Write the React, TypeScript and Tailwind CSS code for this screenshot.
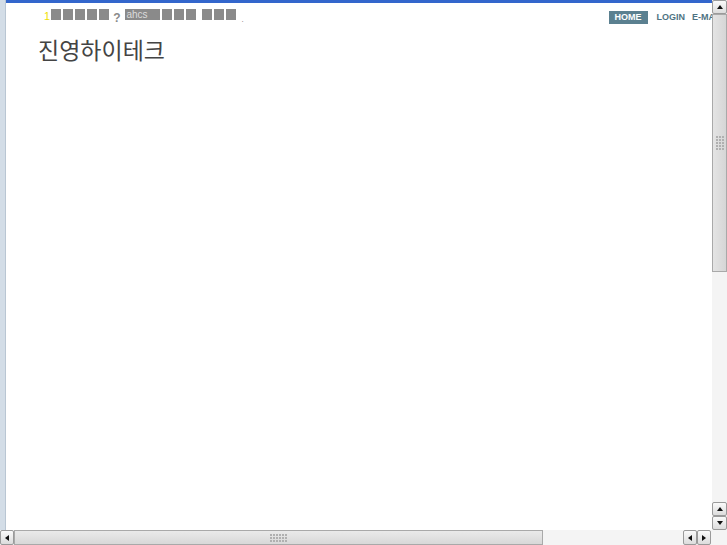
import React from "react";

const Block = () => <span className="inline-block w-[10px] h-[11px] bg-[#8a8a8a] mr-[2px]" />;

const Arrow = ({ dir }: { dir: "up" | "down" | "left" | "right" }) => {
  const pts =
    dir === "up" ? "1,6 4,2 7,6" : dir === "down" ? "1,2 4,6 7,2" : dir === "left" ? "6,1 2,4 6,7" : "2,1 6,4 2,7";
  return (
    <svg width="8" height="8" viewBox="0 0 8 8">
      <polygon points={pts} fill="#111" />
    </svg>
  );
};

const Btn = ({ dir, cls }: { dir: "up" | "down" | "left" | "right"; cls?: string }) => (
  <div
    className={`flex items-center justify-center border border-[#9a9a9a] rounded-[2px] bg-gradient-to-b from-[#fafafa] to-[#dcdcdc] ${cls ?? ""}`}
  >
    <Arrow dir={dir} />
  </div>
);

const Grip = ({ rows, cols }: { rows: number; cols: number }) => (
  <div className="grid gap-[1px]" style={{ gridTemplateColumns: `repeat(${cols}, 2px)` }}>
    {Array.from({ length: rows * cols }).map((_, i) => (
      <span key={i} className="w-[2px] h-[2px] bg-[#b0b0b0]" />
    ))}
  </div>
);

export default function App() {
  return (
    <div className="w-[727px] h-[545px] flex flex-col overflow-hidden bg-white" style={{ fontFamily: "'Liberation Sans', sans-serif" }}>
      <div className="flex flex-1 min-h-0">
        <div className="w-[6px] bg-[#d3dde7] border-r border-[#b9c6d3]" />
        <div className="flex-1 flex flex-col min-w-0 relative">
          <div className="h-[3px] bg-[#3366cc]" />
          <div className="flex items-start">
            <div className="pl-[38px] pt-[5px] flex items-center h-[17px] text-[11px] leading-none">
              <span className="text-[#f0e000] mr-[1px] mt-[5px]">1</span>
              <Block /><Block /><Block /><Block /><Block />
              <span className="text-[#8a8a8a] text-[12px] font-bold mt-[8px] ml-[2px] mr-[5px]">?</span>
              <span className="inline-block h-[11px] w-[35px] bg-[#8a8a8a] text-[#dcdcdc] text-[10px] leading-[12px] pl-[1px] mr-[2px]">ahcs</span>
              <Block /><Block /><Block />
              <span className="w-[4px]" />
              <Block /><Block /><Block />
              <span className="text-[#777] mt-[12px] ml-[3px] text-[8px]">.</span>
            </div>
            <div className="ml-auto flex items-center pt-[8px] font-bold whitespace-nowrap" style={{ fontFamily: "'Liberation Sans', sans-serif" }}>
              <span className="bg-[#5b8090] text-white text-[9px] h-[13px] leading-[13px] w-[39px] text-center">HOME</span>
              <span className="text-[#4f7383] text-[9px] ml-[9px]">LOGIN</span>
              <span className="text-[#4f7383] text-[9px] ml-[7px] w-[20px] overflow-hidden">E-MA</span>
            </div>
          </div>
          <div className="pl-[32px] mt-[10px] text-[23px] leading-[28px] text-[#444]" style={{ fontFamily: "'Noto Sans CJK KR', sans-serif" }}>
            진영하이테크
          </div>
        </div>
        <div className="w-[15px] flex flex-col bg-[#f3f3f3]">
          <Btn dir="up" cls="h-[14px]" />
          <div className="h-[258px] border border-[#a9a9a9] bg-gradient-to-r from-[#e4e4e4] to-[#d6d6d6] flex items-center justify-center">
            <Grip rows={5} cols={3} />
          </div>
          <div className="flex-1 bg-[#f4f4f4]" />
          <Btn dir="up" cls="h-[14px]" />
          <Btn dir="down" cls="h-[14px]" />
        </div>
      </div>
      <div className="h-[15px] flex bg-[#f3f3f3]">
        <Btn dir="left" cls="w-[14px]" />
        <div className="w-[529px] border border-[#a9a9a9] bg-gradient-to-b from-[#eaeaea] to-[#d8d8d8] flex items-center justify-center">
          <Grip rows={3} cols={6} />
        </div>
        <div className="w-[140px] bg-[#f4f4f4]" />
        <Btn dir="left" cls="w-[14px]" />
        <Btn dir="right" cls="w-[14px]" />
        <div className="flex-1 bg-[#f4f4f4]" />
      </div>
    </div>
  );
}
